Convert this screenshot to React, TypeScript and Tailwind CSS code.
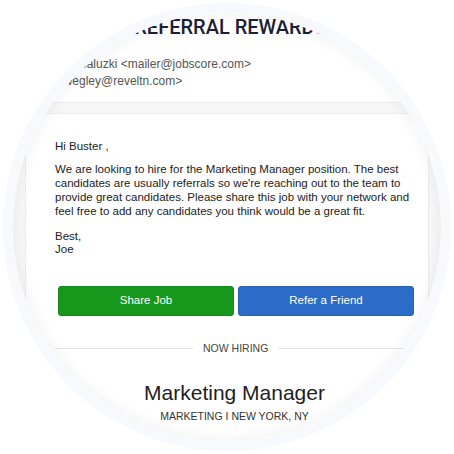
import React from "react";

export default function App() {
  return (
    <div className="w-[454px] h-[454px] bg-white flex items-center justify-center">
      <div className="w-[448px] h-[448px] rounded-full bg-[#f7f9fc] p-[10px]">
        <div className="relative w-full h-full rounded-full overflow-hidden bg-white">
          <div className="flex flex-col w-full h-full">
            <div className="shrink-0 bg-white flex flex-col pt-[2px] h-[90px] border-b border-[#ececec]">
              <div className="text-center pl-[7px] text-[20px] leading-[24px] font-medium text-[#1b2236] font-['Roboto',sans-serif]">
                REFERRAL REWARDS
              </div>
              <div className="mt-[17px] text-[12px] leading-[17px] text-[#555] font-['Liberation_Sans',Arial,sans-serif]">
                <div className="pl-[43px]">Joe Saluzki &lt;mailer@jobscore.com&gt;</div>
                <div className="pl-[37px]">&lt;bwegley@reveltn.com&gt;</div>
              </div>
            </div>
            <div className="flex-1 min-h-0 bg-[#f7f7f7] pt-[10px] px-[12px]">
              <div className="bg-white border border-[#ececec] h-[400px] pl-[29px] pr-[14px] pt-[25px] font-['Liberation_Sans',Arial,sans-serif] text-[#222]">
                <p className="text-[11.5px] leading-[14px]">Hi Buster ,</p>
                <p className="text-[11.5px] leading-[14px] mt-[9px]">
                  We are looking to hire for the Marketing Manager position. The best candidates are usually referrals so we're reaching out to the team to provide great candidates. Please share this job with your network and feel free to add any candidates you think would be a great fit.
                </p>
                <p className="text-[11.5px] leading-[13px] mt-[12px]">
                  Best,
                  <br />
                  Joe
                </p>
                <div className="flex gap-[4px] mt-[30px] ml-[3px]">
                  <div className="flex-1 h-[30px] rounded-[3px] bg-[#17981d] border border-[#138a18] flex items-center justify-center text-white text-[11.5px]">
                    Share Job
                  </div>
                  <div className="flex-1 h-[30px] rounded-[3px] bg-[#2d6bc8] border border-[#2760b8] flex items-center justify-center text-white text-[11.5px]">
                    Refer a Friend
                  </div>
                </div>
                <div className="flex items-center gap-[10px] mt-[26px] mr-[10px] h-[13px]">
                  <div className="w-[138px] h-px bg-[#e2e2e2]" />
                  <div className="text-[10.5px] leading-[13px] text-[#444]">NOW HIRING</div>
                  <div className="flex-1 h-px bg-[#e2e2e2]" />
                </div>
                <div className="mt-[25px] text-center text-[21px] leading-[26px] text-[#1e1e1e]">
                  Marketing Manager
                </div>
                <div className="mt-[4px] text-center text-[10.5px] leading-[13px] text-[#333]">
                  MARKETING I NEW YORK, NY
                </div>
              </div>
            </div>
          </div>
          <div className="absolute inset-0 rounded-full shadow-[inset_0_0_16px_rgba(0,0,0,0.07)] pointer-events-none" />
        </div>
      </div>
    </div>
  );
}
